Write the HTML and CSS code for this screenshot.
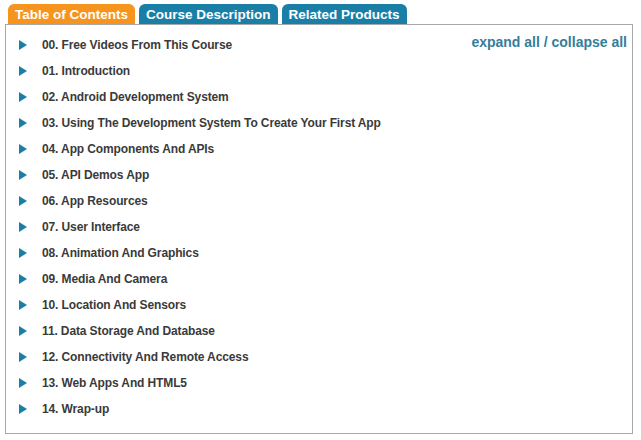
FILE: index.html
```html
<!DOCTYPE html>
<html lang="en">
<head>
    <meta charset="UTF-8">
    <title>Course Table of Contents</title>
    <link rel="stylesheet" href="styles.css">
</head>
<body>

    <div class="tabs">
        <div class="tab active">Table of Contents</div>
        <div class="tab">Course Description</div>
        <div class="tab">Related Products</div>
    </div>

    <div class="panel">
        <a class="toggle-all" href="#">expand all / collapse all</a>
        <ul class="chapters">
            <li><span class="arrow"></span>00. Free Videos From This Course</li>
            <li><span class="arrow"></span>01. Introduction</li>
            <li><span class="arrow"></span>02. Android Development System</li>
            <li><span class="arrow"></span>03. Using The Development System To Create Your First App</li>
            <li><span class="arrow"></span>04. App Components And APIs</li>
            <li><span class="arrow"></span>05. API Demos App</li>
            <li><span class="arrow"></span>06. App Resources</li>
            <li><span class="arrow"></span>07. User Interface</li>
            <li><span class="arrow"></span>08. Animation And Graphics</li>
            <li><span class="arrow"></span>09. Media And Camera</li>
            <li><span class="arrow"></span>10. Location And Sensors</li>
            <li><span class="arrow"></span>11. Data Storage And Database</li>
            <li><span class="arrow"></span>12. Connectivity And Remote Access</li>
            <li><span class="arrow"></span>13. Web Apps And HTML5</li>
            <li><span class="arrow"></span>14. Wrap-up</li>
        </ul>
    </div>

</body>
</html>
```

FILE: styles.css
```css
body {
    font-family: "Liberation Sans", Arial, sans-serif;
    background: #fff;
    margin: 0;
    padding: 4px 8px 0 5px;
}

.tabs {
    display: flex;
    gap: 4px;
    padding-left: 3px;
}

.tab {
    background: #1a7fa7;
    color: #fff;
    font-size: 13.5px;
    font-weight: bold;
    height: 20px;
    line-height: 21px;
    padding: 0 7px;
    border-radius: 6px 6px 0 0;
}

.tab.active {
    background: #f7941e;
}

.panel {
    position: relative;
    border: 1px solid #a8a8a8;
    height: 408px;
}

.toggle-all {
    position: absolute;
    top: 9px;
    right: 5px;
    color: #347d9b;
    font-size: 14px;
    font-weight: bold;
    text-decoration: none;
}

.chapters {
    list-style: none;
    margin: 0;
    padding: 7px 0 0 13px;
}

.chapters li {
    display: flex;
    align-items: center;
    height: 26px;
    font-size: 12px;
    font-weight: bold;
    letter-spacing: -0.12px;
    color: #3a3a3a;
}

.arrow {
    width: 0;
    height: 0;
    border-top: 5px solid transparent;
    border-bottom: 5px solid transparent;
    border-left: 8px solid #1a7fa7;
    margin-right: 15px;
}
```
